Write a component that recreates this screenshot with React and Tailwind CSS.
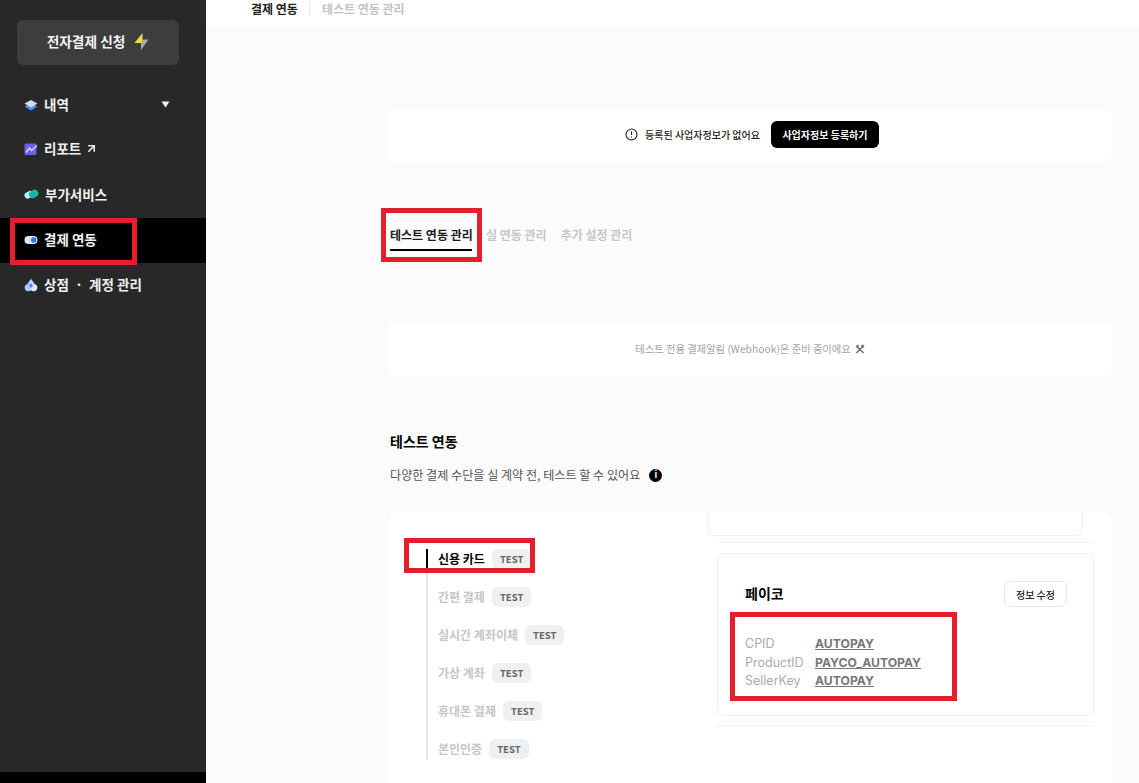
import React from 'react';
import { ArrowUpRight } from 'lucide-react';

const font = 'font-["Noto_Sans_CJK_KR",sans-serif]';

const methods = [
  { name: '신용 카드', active: true },
  { name: '간편 결제' },
  { name: '실시간 계좌이체' },
  { name: '가상 계좌' },
  { name: '휴대폰 결제' },
  { name: '본인인증' },
];

const payco = [
  ['CPID', 'AUTOPAY'],
  ['ProductID', 'PAYCO_AUTOPAY'],
  ['SellerKey', 'AUTOPAY'],
];

const LayersIcon = () => (
  <svg width="14" height="14" viewBox="0 0 14 14">
    <path d="M0.5 8.5 7 5.5l6.5 3L7 12.5z" fill="#4f8ff7" />
    <path d="M0.5 5.5 7 2l6.5 3.5L7 9.5z" fill="#c9defc" />
  </svg>
);

const ChartIcon = () => (
  <svg width="14" height="14" viewBox="0 0 14 14">
    <rect x="0.5" y="1.5" width="12" height="11.5" rx="1.5" fill="#6f5fe8" />
    <path d="M2 10.5 5.5 6l2 2.5L13 3.5" fill="none" stroke="#cfd4fb" strokeWidth="1.4" />
  </svg>
);

const PillsIcon = () => (
  <svg width="15" height="14" viewBox="0 0 15 14">
    <rect x="0.5" y="4.5" width="9" height="6.5" rx="3.2" fill="#b5f5e8" transform="rotate(-25 5 8)" />
    <rect x="5" y="3" width="9.5" height="7.5" rx="3.7" fill="#14b8a6" transform="rotate(-25 10 7)" />
  </svg>
);

const ToggleIcon = () => (
  <svg width="14" height="14" viewBox="0 0 14 14">
    <rect x="0.5" y="3" width="13" height="8" rx="4" fill="#dbe9fd" />
    <circle cx="9.7" cy="7" r="2.7" fill="#2f74ee" />
  </svg>
);

const ShopIcon = () => (
  <svg width="14" height="14" viewBox="0 0 14 14">
    <path d="M7 0.8 10.6 6H3.4z" fill="#bcd6fb" />
    <circle cx="4.3" cy="9.6" r="3.6" fill="#a9c9fa" />
    <circle cx="9.7" cy="9.6" r="3.6" fill="#dbe9fd" />
    <circle cx="7" cy="8" r="1.7" fill="#4f8ff7" />
  </svg>
);

const BoltIcon = () => (
  <svg width="15" height="17" viewBox="0 0 15 17">
    <path d="M14.5 6.5H8.5L5.5 10H7V17z" fill="#a9a9a9" />
    <path d="M8.5 0 0.5 10H7L8.5 6.5z" fill="#f6d84b" />
  </svg>
);

const navItems = [
  { label: '내역', icon: <LayersIcon />, caret: true, pad: 'pb-[2px]' },
  { label: '리포트', icon: <ChartIcon />, link: true, pad: 'pb-[4px]' },
  { label: '부가서비스', icon: <PillsIcon />, pad: 'pb-[3px]' },
  { label: '결제 연동', icon: <ToggleIcon />, active: true, pad: 'pb-[2px]' },
  { label: '상점  ·  계정 관리', icon: <ShopIcon />, pad: 'pb-[2px]' },
];

// red annotation boxes drawn over the screenshot
const Marker = ({ className }) => (
  <div className={`absolute border-[5px] border-[#e2202c] pointer-events-none ${className}`} />
);

const Sidebar = () => (
  <aside className="w-[206px] shrink-0 h-full bg-[#282828] flex flex-col relative">
    <div className="px-[17px] pt-[20px]">
      <button className="w-[162px] h-[45px] pb-[2px] rounded-md bg-[#3d3d3d] text-[#f2f2f2] text-[13.7px] font-bold flex items-center justify-center gap-[9px]">
        전자결제 신청
        <BoltIcon />
      </button>
    </div>
    <nav className="mt-[18px] flex flex-col">
      {navItems.map((item) => (
        <div
          key={item.label}
          className={`h-[45px] flex items-center pl-[24px] pr-[36px] gap-[6px] text-[13.5px] font-bold text-[#f0f0f0] ${item.pad} ${item.active ? 'bg-black' : ''}`}
        >
          {item.icon}
          <span className="whitespace-pre">{item.label}</span>
          {item.link && <ArrowUpRight size={13} strokeWidth={3} className="-ml-[2px]" />}
          {item.caret && (
            <svg className="ml-auto" width="9" height="7" viewBox="0 0 9 7">
              <path d="M0.5 0.5h8L4.5 6.5z" fill="#f0f0f0" />
            </svg>
          )}
        </div>
      ))}
    </nav>
    <div className="mt-auto h-[11px] bg-black" />
  </aside>
);

const Badge = () => (
  <span className="h-[20px] px-[8px] rounded-md bg-[#eff0f1] text-[#666] text-[9.5px] font-bold flex items-center">TEST</span>
);

const MethodList = () => (
  <ul className="w-[291px] shrink-0 self-start mt-[37px] ml-[38px] h-[211px] border-l-2 border-[#e5e6e8] flex flex-col gap-[18px]">
    {methods.map((m) => (
      <li
        key={m.name}
        className={`h-[20px] shrink-0 -ml-[2px] pl-[10px] border-l-2 flex items-center gap-[7px] text-[12px] font-bold ${m.active ? 'border-black text-black' : 'border-transparent text-[#c6c6c6]'}`}
      >
        {m.name}
        <Badge />
      </li>
    ))}
  </ul>
);

const PaycoCard = () => (
  <div className="flex-1 mr-[18px] min-w-0">
    <div className="h-[24px] -ml-[10px] mr-[11px] border border-t-0 border-[#f0f0f0] rounded-b-lg" />
    <div className="h-[7px] border-b border-[#f2f2f2]" />
    <div className="mt-[10px] h-[163px] rounded-md border border-[#f0f0f0] bg-white pl-[27px] pr-[26px] pt-[27px]">
      <div className="flex items-start justify-between">
        <h3 className="mt-[1px] text-[14px] font-bold text-black leading-[22px]">페이코</h3>
        <button className="w-[63px] h-[26px] border border-[#e8e8e8] rounded-md text-[10px] font-medium text-[#222] bg-white">정보 수정</button>
      </div>
      <dl className="mt-[28px] grid grid-cols-[70px_auto] justify-start text-[12.5px] leading-[18.5px] font-['Inter',sans-serif]">
        {payco.map(([key, value]) => (
          <React.Fragment key={key}>
            <dt className="text-[#ababab]">{key}</dt>
            <dd className="text-[#777] font-bold text-[12.2px] underline">{value}</dd>
          </React.Fragment>
        ))}
      </dl>
    </div>
    <div className="mt-[9px] border-b border-[#f2f2f2]" />
  </div>
);

export default function App() {
  return (
    <div className={`h-screen w-full flex overflow-hidden bg-[#fbfbfc] relative ${font}`}>
      <Sidebar />
      <main className="flex-1 min-w-0 h-full overflow-hidden">
        <header className="h-[27px] bg-white flex items-start pl-[45px] pt-[1px] text-[12px] font-bold">
          <span className="text-[#222] leading-[16px]">결제 연동</span>
          <span className="w-px h-[14px] bg-[#e6e6e6] ml-[11px] mr-[12px] mt-[1px]" />
          <span className="text-[#c4c4c4] leading-[16px]">테스트 연동 관리</span>
        </header>
        <div className="pl-[182px] pr-[27px]">
          <section className="mt-[83px] h-[51px] bg-white rounded-md flex items-center justify-center gap-[11px] pl-[4px] pb-[2px]">
            <span className="flex items-center gap-[7px] text-[10px] font-medium text-[#222]">
              <svg width="13" height="13" viewBox="0 0 13 13" fill="none">
                <circle cx="6.5" cy="6.5" r="5.5" stroke="#222" strokeWidth="1.1" />
                <path d="M6.5 3.5v3.6M6.5 8.6v1" stroke="#222" strokeWidth="1.1" />
              </svg>
              등록된 사업자정보가 없어요
            </span>
            <button className="w-[108px] h-[27px] bg-black text-white rounded-md text-[10px] font-bold">사업자정보 등록하기</button>
          </section>

          <div className="mt-[68px] pl-[2px] flex items-start gap-[14px] text-[12px] font-bold text-[#c6c6c6]">
            <span className="w-[82px] h-[22px] leading-[12px] text-[#1c1c1c] border-b-2 border-black whitespace-nowrap">테스트 연동 관리</span>
            <span className="leading-[12px]">실 연동 관리</span>
            <span className="leading-[12px]">추가 설정 관리</span>
          </div>

          <section className="mt-[71px] h-[54px] bg-white rounded-md flex items-center justify-center gap-[4px] pb-[1px] text-[10.3px] text-[#a3a3a3]">
            테스트 전용 결제알림 (Webhook)은 준비 중이에요
            <svg width="10" height="10" viewBox="0 0 10 10" fill="none">
              <path d="M1.5 9 7.5 2.5" stroke="#6b6b6b" strokeWidth="1.5" />
              <path d="M8.5 9 2.5 3" stroke="#6b6b6b" strokeWidth="1.5" />
              <path d="M0.5 2.5 3 0.5l1 1L2 4z" fill="#6b6b6b" />
              <path d="M6 1.5 8 0.5l1.5 2L8 4z" fill="#6b6b6b" />
            </svg>
          </section>

          <h2 className="mt-[55px] pl-[2px] text-[14px] font-bold text-black leading-[20px]">테스트 연동</h2>
          <p className="mt-[15px] pl-[2px] flex items-center gap-[9px] text-[12.1px] text-[#555] leading-[18px]">
            다양한 결제 수단을 실 계약 전, 테스트 할 수 있어요
            <span className="w-[13px] h-[13px] rounded-full bg-black text-white text-[9px] font-bold flex items-center justify-center">i</span>
          </p>

          <section className="mt-[28px] h-[290px] bg-white rounded-xl flex">
            <MethodList />
            <PaycoCard />
          </section>
        </div>
      </main>

      <Marker className="left-[10px] top-[218px] w-[127px] h-[47px]" />
      <Marker className="left-[381px] top-[208px] w-[101px] h-[54px]" />
      <Marker className="left-[404px] top-[538px] w-[131px] h-[35px]" />
      <Marker className="left-[730px] top-[612px] w-[227px] h-[89px]" />
    </div>
  );
}
